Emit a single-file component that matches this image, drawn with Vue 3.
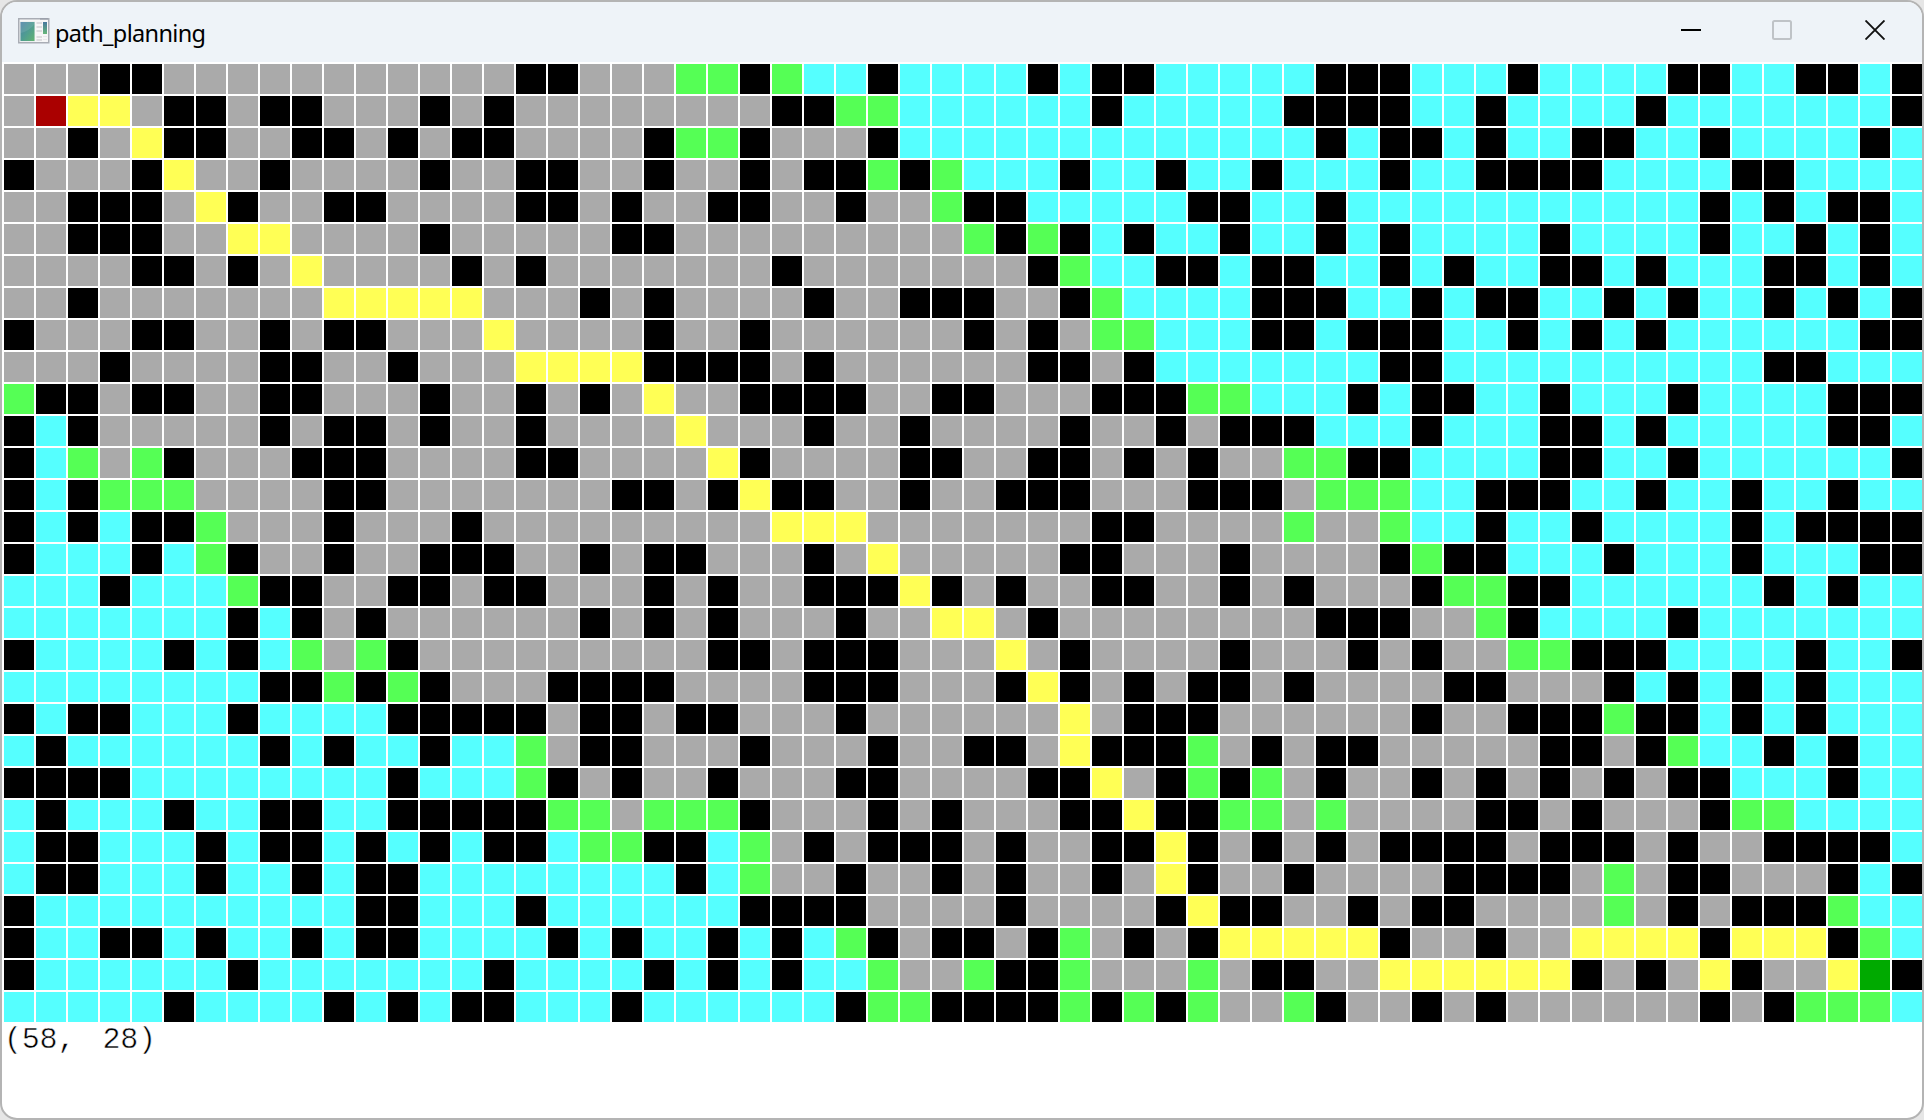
<script setup>
const map = [
  '...##...........##...gg#gcc#cccc#c##ccccc###ccc#cccc##cc##c#',
  '.ryy.##.##...#.#........##ggcccccc#ccccc####cc#cccc#ccccccc#',
  '..#.y##..##.#.##....#gg#...#ccccccccccccc#c##c#cc##cc#cccc#c',
  '#...#y..#....#..##..#..#.##g#gccc#cc#cc#ccc#cc####cccc##cccc',
  '..###.y#..##....##.#..##..#..g##ccccc##cc#ccccccccccc#c#c##c',
  '..###..yy....#.....##.........g#g#c#cc#cc#c#cccc#cccc#cc#c#c',
  '....##.#.y....#.#.......#.......#gcc##c##cc#c#cc##c#ccc##c#c',
  '..#.......yyyyy...#.#....#..###..#gcccc###cc#c##cc#c#cc#c#c#',
  '#...##..#.##...y....#..#......#.#.ggccc##c###cc#c#c#cccccc##',
  '...#....##..#...yyyy####.#......##.#ccccccc##cccccccccc##ccc',
  'g##.##..##...#..#.#.y..####..##...###ggccc#c##cc#ccc#cccc###',
  '#c#.....#.##.#..#....y...#..#....#..#.###ccc#ccc##c#ccccc##c',
  '#cg.g#...###....##....y#....##..##.#.#..gg##cccc##cc#cccccc#',
  '#c#ggg....##.......##.#y##..#..###...###.gggcc###cc#cc#cc#cc',
  '#c#c##g...#...#.........yyy.......##....g..gcc#cc#cccc#c####',
  '#ccc#cg#..#..###..#.##...#.y.....##...#....#g##ccc#ccc#ccc##',
  'ccc#cccg##..##.##...#.#..###y#.#..##..#.#...#gg##cccccc#c#cc',
  'ccccccc#c#.#......#.#.#...#..yy.#........###..g#cccc#ccccccc',
  '#cccc#c#cg.g#.........##.###...y.#....#...#.#..gg###cccc#cc#',
  'cccccccc##g#g#...####....###...#y#.#.##.#....##...#c#c#c#ccc',
  '#c##ccc#cccc#####.##.##...#......y.###......#..###g##c#c#ccc',
  'c#cccccc#c#cc#ccg.##...#...#..##.y###g.#.##.....##.#gcc#c#cc',
  '####cccccccc#cccg#.#..#...##....##y.#g#g.#..#.#.#.#.##ccc#cc',
  'c#ccc#cc##cc#####gg.ggg#...#.#...##y##gg.g....##.#...#ggcccc',
  'c##ccc#c##c#c#c##cgg##cg.#.###.#..##y#.#.#.####.###.#..####c',
  'c##ccc#cc#c##cccccccc#cg..#..#.#..#.y#..#....####.g.##...#c#',
  '#cccccccccc##ccc#cccccc####....#....#y##..#.##....g.#.###gcc',
  '#cc##c#cc#c##cccc#c#cc#c#cg#.##.#g.#.#yyyyy#..#..yyyy#yyy#gc',
  '#cccccc#ccccccc#cccc#c#c#ccg..g##g...g.##..yyyyyy#.#.y#..yt#',
  'ccccc#cccc#c#c##ccc#cccccc#gg####g#g#g..g#..#.#......#.#gggc',
]

const kinds = {
  '.': 'visited',
  '#': 'wall',
  c: 'free',
  g: 'open',
  y: 'path',
  r: 'start',
  t: 'target',
}
</script>

<template>
  <div class="desktop">
    <div class="window">
      <header class="titlebar">
        <svg class="app-icon" width="32" height="26" viewBox="0 0 32 26">
          <defs>
            <linearGradient id="pane" x1="0" y1="0" x2="1" y2="1">
              <stop offset="0" stop-color="#4f82a8" />
              <stop offset="0.5" stop-color="#4f9c92" />
              <stop offset="1" stop-color="#62b471" />
            </linearGradient>
            <linearGradient id="bar" x1="0" y1="0" x2="0" y2="1">
              <stop offset="0" stop-color="#47789e" />
              <stop offset="1" stop-color="#68b77a" />
            </linearGradient>
          </defs>
          <rect x="0.75" y="0.75" width="30" height="24" fill="#f6f6f7" stroke="#a9adb5" stroke-width="1.5" />
          <path d="M22 1H30" stroke="#8d93a0" />
          <rect x="2" y="3.5" width="15" height="20" fill="#e4e9e9" />
          <rect x="2.5" y="4" width="14" height="19" fill="url(#pane)" />
          <path d="M2.5 15C8 14 14 10 16.5 6V4H2.5Z" fill="#fff" opacity="0.1" />
          <path d="M18.5 5H24M18.5 9H24M18.5 13H24M18.5 19H24M18.5 22H24" stroke="#d3d4d8" stroke-width="1.5" />
          <rect x="25" y="4" width="4" height="12" fill="url(#bar)" />
          <path d="M25 18.5H29M25 21.5H29" stroke="#e7e7ea" />
        </svg>
        <h1 class="title">path_planning</h1>
        <div class="controls">
          <svg class="minimize" width="20" height="20" viewBox="0 0 20 20"><path d="M0 10H20" stroke="#000" stroke-width="2" /></svg>
          <svg class="maximize" width="20" height="20" viewBox="0 0 20 20"><rect x="1" y="1" width="18" height="18" rx="1.5" fill="none" stroke="#bfc3c7" stroke-width="2" /></svg>
          <svg width="20" height="20" viewBox="0 0 20 20"><path d="M0.5 0.5L19.5 19.5M19.5 0.5L0.5 19.5" stroke="#111" stroke-width="1.9" /></svg>
        </div>
      </header>
      <main class="board">
        <template v-for="(row, y) in map" :key="y">
          <i v-for="(cell, x) in row" :key="x" :class="kinds[cell]"></i>
        </template>
      </main>
      <footer class="status">(58, 28)</footer>
    </div>
  </div>
</template>

<style>
body {
  margin: 0;
  overflow: hidden;
}
</style>

<style scoped>
.desktop {
  width: 1924px;
  height: 1120px;
  background: #e6e6e6;
}
.window {
  box-sizing: border-box;
  width: 1924px;
  height: 1120px;
  border: 2px solid #b4b4b4;
  border-radius: 17px;
  overflow: hidden;
  background: #fff;
  display: flex;
  flex-direction: column;
}
.titlebar {
  flex: none;
  height: 60px;
  box-sizing: border-box;
  padding: 0 37px 0 16px;
  background: #eef3f8;
  display: flex;
  align-items: center;
}
.app-icon {
  margin-bottom: 2px;
}
.title {
  margin: 1px 0 0 5px;
  font: 400 23.5px/32px "Noto Sans", "Open Sans", sans-serif;
  letter-spacing: -0.65px;
  color: #000;
}
.controls {
  margin-left: auto;
  margin-bottom: 4px;
  display: flex;
}
.controls svg {
  display: block;
}
.controls .minimize {
  margin-right: 71px;
}
.controls .maximize {
  margin-right: 73px;
}
.board {
  flex: none;
  display: grid;
  grid-template-columns: repeat(60, 30px);
  grid-auto-rows: 30px;
  gap: 2px;
  padding: 2px 0 2px 2px;
}
.visited {
  background: #aaaaaa;
}
.wall {
  background: #000000;
}
.free {
  background: #55ffff;
}
.open {
  background: #55ff55;
}
.path {
  background: #ffff55;
}
.start {
  background: #aa0000;
}
.target {
  background: #00aa00;
}
.status {
  padding-left: 2px;
  font: 30px/33px "Liberation Mono", monospace;
  letter-spacing: -0.2px;
  word-spacing: 9.5px;
  color: #000;
  -webkit-text-stroke: 0.5px #fff;
}
</style>
